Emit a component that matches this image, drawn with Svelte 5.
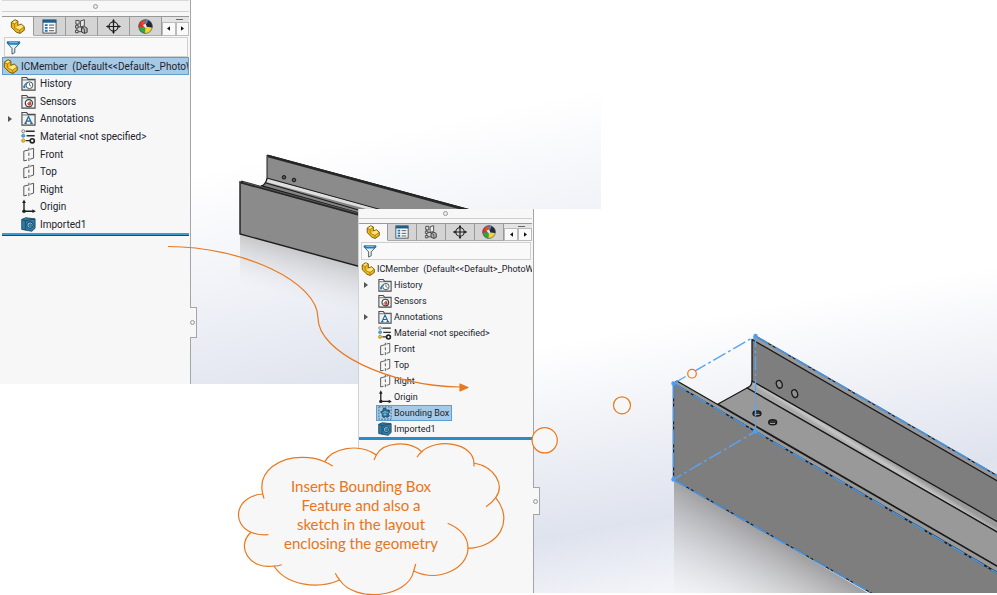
<script>
  const tabs = [
    { icon: 'part', label: 'Feature tree' },
    { icon: 'props', label: 'Properties' },
    { icon: 'config', label: 'Configurations' },
    { icon: 'target', label: 'Dimensions' },
    { icon: 'ball', label: 'Appearances' }
  ];

  const before = [
    { icon: 'history', text: 'History' },
    { icon: 'sensors', text: 'Sensors' },
    { icon: 'notes', text: 'Annotations', expandable: true },
    { icon: 'material', text: 'Material <not specified>' },
    { icon: 'plane', text: 'Front' },
    { icon: 'plane', text: 'Top' },
    { icon: 'plane', text: 'Right' },
    { icon: 'origin', text: 'Origin' },
    { icon: 'solid', text: 'Imported1' }
  ];

  const after = [
    { icon: 'history', text: 'History', expandable: true },
    ...before.slice(1, 8),
    { icon: 'bbox', text: 'Bounding Box', selected: true },
    before[8]
  ];
</script>

{#snippet glyph(name)}
  <svg class="icon" viewBox="0 0 16 16" aria-hidden="true">
    {#if name === 'part'}
      <path d="M1.400 3.400 5.400.8 8.400 2.200V6.800L12 5.400 15.200 8.200v3.800L10.600 15.400 6.800 14 1.400 8.800z" fill="#eeb91c" stroke="#6e5208" stroke-width="1" stroke-linejoin="round" />
      <path d="M2.200 3.600 5.400 1.500 7.800 2.600 4.600 4.800zM5.600 9.400 8.600 7.400 11.800 6.200 14.600 8.400 10.200 11.400z" fill="#ffe680" />
      <path d="M1.600 3.800 4.700 5.200v4.200l5.600 2.600 4.700-3.600M10.300 12v3M4.700 5.200 8.200 2.600" fill="none" stroke="#8a690c" stroke-width=".7" />
    {:else if name === 'props'}
      <rect x="1" y="1" width="14" height="14" fill="#fff" stroke="#3c4a55" />
      <path d="M1 1h14v3H1z" fill="#1c5f8f" />
      <path d="M3 6.500h3M3 9.500h3M3 12.500h3" stroke="#1f78ad" stroke-width="2" />
      <path d="M7.500 6.500H13M7.500 9.500H13M7.500 12.500H13" stroke="#434343" stroke-width="1" />
    {:else if name === 'config'}
      <path d="M3 4v11M3 8.500h5M3 13.500h6" fill="none" stroke="#444" stroke-width="1" />
      <path d="M2 1.500h3.500v4H2zM1.600 7h2.800v2.600H1.600zM1.600 12h2.800v2.600H1.600z" fill="#ddd" stroke="#444" />
      <path d="M7 2 11 .8v6.400L7 8.400z" fill="#eee" stroke="#444" />
      <path d="M8 9.400l3.400-1.200L14 9.800v4.400l-2.800 1.200L8 13.800z" fill="#b5b5b5" stroke="#333" />
      <path d="M8 9.400l3.200 1.600v4.200" fill="none" stroke="#333" stroke-width=".8" />
    {:else if name === 'target'}
      <circle cx="8" cy="8" r="4.800" fill="none" stroke="#1c1c1c" stroke-width="1.300" />
      <path d="M8 .8v14.400M.8 8h14.400" stroke="#1c1c1c" stroke-width="1.300" />
      <path d="m8 0-1.600 2.600h3.200zM8 16l-1.600-2.600h3.200zM0 8l2.600-1.600v3.200zM16 8l-2.600-1.600v3.200z" fill="#1c1c1c" />
    {:else if name === 'ball'}
      <circle cx="8" cy="8" r="7.400" fill="#2f6fbd" />
      <path d="M8 8 3 2.500A7.400 7.400 0 0 1 8 .6l1 .1z" fill="#3d8ed6" />
      <path d="M8 8 3 2.500A7.400 7.400 0 0 0 .8 9z" fill="#dd3020" />
      <path d="M3 2.500 8 .6l.4 4L4 7z" fill="#e8452f" />
      <path d="M8 8 .8 9a7.400 7.400 0 0 0 6.600 6.400z" fill="#37a33c" />
      <path d="M8 8l-.6 7.400A7.400 7.400 0 0 0 15.200 9z" fill="#f5d42c" />
      <path d="M8 8 9.600.8A7.400 7.400 0 0 1 15.200 9z" fill="#27292d" />
      <path d="M8 .6l3 .6L9.400 5 8 5z" fill="#3d8ed6" />
      <path d="M5 6.600 8 5l1.400 3L8 9.600z" fill="#f3e9e2" />
      <circle cx="8" cy="8" r="7.300" fill="none" stroke="#555" stroke-width=".6" />
    {:else if name === 'filter'}
      <path d="M1 3 6.400 9v6l3-1.600V9L15 3z" fill="#e9edf0" stroke="#3f5563" stroke-width="1" stroke-linejoin="round" />
      <path d="M1 1.400h14v2.200L13 5H3L1 3.600z" fill="#1f7fb4" />
      <path d="M3.600 2.800h8.800" stroke="#9ed2ee" stroke-width=".8" />
    {:else if name === 'history' || name === 'sensors' || name === 'notes'}
      <path d="M1 15V1.600h5l1.400 2H15V15z" fill="#f1f1f1" stroke="#4b4b4b" stroke-width="1.200" />
      <path d="M1.400 4.200h13.200" stroke="#4b4b4b" stroke-width=".8" />
      {#if name === 'history'}
        <circle cx="9" cy="9.800" r="3.600" fill="#fff" stroke="#3b4b55" />
        <path d="M9 7.500v2.300l1.800 1" fill="none" stroke="#333" stroke-width=".8" />
        <path d="M3.400 12.800c0-3 1-4.600 3.600-5.400" fill="none" stroke="#1f7fb4" stroke-width="1.300" />
        <path d="m2 10.400 1.200 3 2.200-2z" fill="#1f7fb4" />
      {:else if name === 'sensors'}
        <circle cx="8.400" cy="9.800" r="3.800" fill="#fff" stroke="#3d3d3d" stroke-width="1.300" />
        <path d="m6.800 11.600 3.600-4 .6 3.400-1.600 1.600z" fill="#d93d26" />
        <path d="m6.600 11 3-3.200" stroke="#222" stroke-width=".9" />
      {:else}
        <path d="M4.600 13.200 8 5.800l3.400 7.400M5.800 10.800h4.400M3.600 13.300h2.600M9.800 13.300h2.800" fill="none" stroke="#1c6c9c" stroke-width="1.300" />
      {/if}
    {:else if name === 'material'}
      <path d="M5 2.400h9.600M6 7.200h8.600M5 12.400h5" stroke="#2d2d2d" stroke-width="1.500" />
      <circle cx="2.400" cy="2.400" r="1.600" fill="#eee" stroke="#666" stroke-width=".8" />
      <circle cx="2.400" cy="7.200" r="1.700" fill="#4db1dd" stroke="#24779e" stroke-width=".7" />
      <circle cx="2.400" cy="12.400" r="1.800" fill="#f2c51d" stroke="#96760a" stroke-width=".7" />
      <circle cx="12" cy="12.600" r="2.200" fill="#fff" stroke="#222" stroke-width="1.800" />
    {:else if name === 'plane'}
      <path d="M8 3.200 3 4.400v10.400l3.400-.8M9.600 2.400 13.400 1.400v10.400l-3.600 1.200M8.400.8v3M8.400 6v3.400M8.400 11.600v3.400" fill="none" stroke="#4d4d4d" stroke-width="1" />
    {:else if name === 'origin'}
      <path d="M3.200 2.400V13h10" fill="none" stroke="#1f1f1f" stroke-width="1.500" />
      <path d="M3.200.4 1.200 4.200h4zM15.800 13l-3.600-2v4z" fill="#1f1f1f" />
      <circle cx="3.200" cy="13" r="1.900" fill="#1f1f1f" />
    {:else if name === 'solid'}
      <path d="M.8 2.600 5 .8l10 1.200v10l-3.400 3.200-10.800-2z" fill="#2f7ea8" stroke="#153f58" stroke-width=".9" stroke-linejoin="round" />
      <path d="M.8 2.600 4.600 4v10M4.600 4 15 2" fill="none" stroke="#153f58" stroke-width=".8" />
      <circle cx="9.600" cy="8.600" r="3.400" fill="#8fc8e2" stroke="#123a52" />
      <circle cx="10" cy="8.800" r="1.700" fill="#3a8bb5" stroke="#123a52" stroke-width=".6" />
    {:else if name === 'bbox'}
      <rect x="1" y="1" width="14" height="14" fill="none" stroke="#3c5a70" stroke-dasharray="2 1.400" />
      <path d="M3 6.600 5.600 5.400 6 2.800l2.600-.6 1.200 2.600 3-.4.400 3-1.600 1.400 1.400 2.600-2.400 1.600-2-1-1.800 1.400-2-1.600.2-2.400z" fill="#256f9b" stroke="#123a52" stroke-width=".8" />
      <path d="m5 8 3-1.600 3.600 1.200M8 6.400v5M6 10l4-.6" fill="none" stroke="#9bcde8" stroke-width=".8" />
    {/if}
  </svg>
{/snippet}

{#snippet panel(id, items)}
  <aside class="panel">
    <div class="grip"><i class="knob"></i></div>
    <div class="tabs">
      {#each tabs as tab, i}
        <button class="tab" class:active={i === 0} aria-label={tab.label}>{@render glyph(tab.icon)}</button>
      {/each}
      <div class="pager">
        <button aria-label="Previous tabs"><svg viewBox="0 0 4 6"><path d="M4 0 0 3l4 3z" /></svg></button>
        <button aria-label="Next tabs"><svg viewBox="0 0 4 6"><path d="m0 0 4 3-4 3z" /></svg></button>
      </div>
    </div>
    <label class="filter" for={id}>
      {@render glyph('filter')}
      <input {id} type="text" aria-label="Filter" />
    </label>
    <div class="root">{@render glyph('part')}<span>ICMember&nbsp; (Default&lt;&lt;Default&gt;_PhotoW</span></div>
    <ul class="tree">
      {#each items as item}
        <li>
          <span class="twist">
            {#if item.expandable}
              <button aria-label="Expand {item.text}"><svg viewBox="0 0 4 6"><path d="m0 0 4 3-4 3z" /></svg></button>
            {/if}
          </span>
          <span class="item" class:selected={item.selected}>{@render glyph(item.icon)}<span>{item.text}</span></span>
        </li>
      {/each}
    </ul>
    <div class="rollback"></div>
    <div class="flap"><i class="knob"></i></div>
  </aside>
{/snippet}

<main class="desk">
  <section class="window first" aria-label="Before">
    <svg class="scene" aria-hidden="true">
      <defs>
        <linearGradient id="shade1" gradientUnits="userSpaceOnUse" x1="300" y1="250" x2="288" y2="296">
          <stop offset="0" stop-color="#bcbcbe" stop-opacity=".8" />
          <stop offset="1" stop-color="#dcdde2" stop-opacity="0" />
        </linearGradient>
      </defs>
      <path d="M240 234 420 283v80L240 310z" fill="url(#shade1)" />
      <path d="M268 178 382 210v20h-40L262 186z" fill="#858585" />
      <path d="M268 179 382 210h-12L266 182z" fill="#dedede" />
      <path d="M267 155 471 210h-89L267 178z" fill="#8b8b8b" stroke="#1d1d1d" stroke-width="1" />
      <path d="M268 156 471 211" stroke="#262626" stroke-width="2.600" />
      <path d="M267 178q-1 7-6 8" fill="none" stroke="#1d1d1d" stroke-width="1.300" />
      <path d="M266 183 362 211M262 186 358 213" stroke="#1d1d1d" stroke-width="1.300" />
      <path d="M240 182 420 231v52L240 234z" fill="#8b8b8b" stroke="#1d1d1d" stroke-width="1.400" />
      <path d="M241 182 420 231" stroke="#262626" stroke-width="3" />
      <path d="M243 182 420 230" stroke="#777" stroke-width=".6" />
      <circle cx="284" cy="177.300" r="1.800" fill="#555" stroke="#1a1a1a" />
      <circle cx="294" cy="180" r="1.800" fill="#555" stroke="#1a1a1a" />
    </svg>
    {@render panel('filter-before', before)}
  </section>

  <section class="window second" aria-label="After">
    <svg class="scene" aria-hidden="true">
      <defs>
        <linearGradient id="shade2" gradientUnits="userSpaceOnUse" x1="760" y1="530" x2="704" y2="626">
          <stop offset="0" stop-color="#a0a0a2" />
          <stop offset="1" stop-color="#eeeff2" stop-opacity="0" />
        </linearGradient>
        <linearGradient id="fillet" gradientUnits="userSpaceOnUse" x1="880" y1="454" x2="875" y2="462">
          <stop offset="0" stop-color="#9a9a9a" />
          <stop offset=".6" stop-color="#c6c6c6" />
          <stop offset="1" stop-color="#a9a9a9" />
        </linearGradient>
      </defs>
      <g transform="translate(-358 -209)" stroke-linejoin="round">
        <path d="M674 479 880 600H674z" fill="url(#shade2)" />
        <path d="M755.500 336 1197 591v6L752 339.500z" fill="#999" />
        <path d="M752 339.500 1197 596v42L752 381z" fill="#7e7e7e" stroke="#1a1a1a" stroke-width="1.300" />
        <path d="M752 381q0 5-5 7L1197 647v-11z" fill="url(#fillet)" stroke="#1a1a1a" stroke-width="1.300" />
        <path d="M747 388 718 404 1197 682v-35z" fill="#999" stroke="#1a1a1a" stroke-width="1.300" />
        <path d="M673.500 383.500 677 381 1197 682v7z" fill="#999" stroke="#1a1a1a" stroke-width="1.300" />
        <path d="M673.500 383.500 1197 690v90L673.500 479.500z" fill="#7e7e7e" />
        <g fill="#909090" stroke="#1a1a1a" stroke-width="1.300">
          <ellipse cx="779.300" cy="384.300" rx="2.800" ry="4" transform="rotate(-20 779.300 384.300)" />
          <ellipse cx="794.700" cy="393.600" rx="2.800" ry="4" transform="rotate(-20 794.700 393.600)" />
          <ellipse cx="757" cy="413.500" rx="4" ry="2.600" fill="#333" />
          <ellipse cx="772.700" cy="422.300" rx="4" ry="2.600" fill="#333" />
        </g>
        <path d="M754.500 414.500h5M770 423.500h5" stroke="#999" stroke-width="1.200" />
        <path d="M755.500 336 1197 591M673.500 479.500V383.500L1197 690M673.500 479.500 1197 780" fill="none" stroke="#1f1f1f" stroke-width="1.300" />
        <path d="M755.500 336 1197 591M673.500 383.500 1197 690M673.500 479.500 1197 780M673.500 383.500v96" fill="none" stroke="#4a98e8" stroke-width="1.600" stroke-dasharray="15 3 2 3" />
        <path d="M673.500 383.500 755.500 336v95.500L673.500 479.500" fill="none" stroke="#5aa5f2" stroke-width="1.400" stroke-dasharray="14 3 3 3" />
        <g fill="#4aa0f8">
          <circle cx="755.500" cy="336" r="2.200" />
          <circle cx="673.500" cy="383.500" r="2.200" />
          <circle cx="755.500" cy="431.500" r="2.200" />
          <circle cx="673.500" cy="479.500" r="2.200" />
        </g>
      </g>
    </svg>
    {@render panel('filter-after', after)}
  </section>

  <svg class="markup" aria-hidden="true">
    <g fill="#f7f7f7" stroke="#e8791f" stroke-width="1.200" stroke-linejoin="round">
      <path d="M168 246.500C243 246.500 318 282 318 318 318 352 389 386 460 387" fill="none" />
      <path d="m460 384 8 3.500-8 3.500z" fill="#e8791f" />
      <path d="M262.700 494C257 470 281 457 302.700 457.300 311 457.300 319 459 324.700 461.700 332 449 358 442 376.300 455 383 442 409 440 421.700 451.700 436 438 473 442 474 463 495 467 505 485 495.700 497.700 514 520 500 547 468 548.300 468 568 439 583 413.700 571 408 598 355 603 339.700 580 317 590 286 585 274 566 250 570 235 547 251 532.300 231 524 235 496 262.700 494Z" />
      <path d="M262.700 494 264 498.500M324.700 461.700Q329 463.500 332.700 466M376.300 455 374 460M421.700 451.700Q419 454 417 457.300M474 463v3.500M495.700 497.700Q492 503 486 506.700M468 548.300Q468 532 447.700 523.300M413.700 571 415.700 564M339.700 580Q337 577 335.300 573.300M274 566Q278 566 281.700 564.700M251 532.300Q259 535.500 268.300 534.700" fill="none" />
      <circle cx="544.700" cy="440.300" r="12.600" />
      <circle cx="622" cy="405.300" r="8.500" />
      <circle cx="692" cy="373.700" r="4.300" />
    </g>
  </svg>
  <p class="callout">Inserts Bounding Box<br />Feature and also a<br />sketch in the layout<br />enclosing the geometry</p>
</main>

<style>
  :global(body) { margin: 0; background: #fff; }
  .desk {
    position: relative;
    min-height: 595px;
    overflow: hidden;
    font-family: Roboto, "Noto Sans", sans-serif;
    color: #20232e;
  }
  .window { position: absolute; display: flex; height: 384px; }
  .first {
    --panel: 191px; --pad: 2px; --grip: 12px; --gap: 4px; --tab: 32px; --tabs: 20px;
    --filter: 20px; --root: 18px; --tree: 158px; --icon: 15px; --text: 10px; --twist: 19px;
    --flap: 307px; --flap-size: 31px; --bar: linear-gradient(#3d9bd6 50%, #2c33a8 50%);
    left: 0; top: 0; width: 601px;
    background: linear-gradient(168deg, #fff 42%, #f1f3f8 65%, #e0e4ee 90%);
  }
  .second {
    --panel: 176px; --pad: 0px; --grip: 10px; --gap: 4px; --tab: 29px; --tabs: 18px;
    --filter: 18px; --root: 17px; --tree: 160px; --icon: 14px; --text: 9px; --twist: 17px;
    --flap: 278px; --flap-size: 28px; --bar: #2b8bc6;
    left: 358px; right: 0; top: 209px;
    background: linear-gradient(170deg, #fff 34%, #dfe3ee 73%, #f8f9fb 92%);
  }
  .scene, .markup { position: absolute; left: 0; top: 0; width: 100%; height: 100%; }
  .markup { pointer-events: none; }
  .panel {
    position: relative;
    box-sizing: border-box;
    width: var(--panel);
    padding: 0 1px 0 var(--pad);
    background: #f7f7f7;
    border-right: 1px solid #a5a5a5;
    font-size: var(--text);
    display: flex;
    flex-direction: column;
  }
  .second .panel { border-left: 1px solid #d2d2d2; }
  .icon { width: var(--icon); height: var(--icon); flex: none; display: block; }
  button { padding: 0; border: 0; background: none; font: inherit; color: inherit; display: flex; align-items: center; justify-content: center; }
  button svg { fill: #111; }
  .grip { box-sizing: border-box; height: var(--grip); border-bottom: 1px solid #cfcfcf; display: flex; align-items: center; justify-content: center; }
  .first .grip { border-top: 1px solid #d8d8d8; }
  .knob { box-sizing: border-box; width: 5px; height: 5px; border: 1px solid #999; border-radius: 50%; background: #eee; }
  .tabs { box-sizing: border-box; height: var(--tabs); margin-top: var(--gap); display: flex; border-top: 1px solid #999; }
  .tab { box-sizing: border-box; width: var(--tab); background: #d4d4d4; border-right: 1px solid #999; border-bottom: 1px solid #aaa; }
  .tab.active { background: #f9f9f9; border-bottom-color: #f9f9f9; }
  .pager { flex: 1; display: flex; align-items: flex-end; position: relative; background: #e4e4e4; }
  .pager::before { content: ""; position: absolute; top: 2px; left: 50%; width: 7px; height: 1px; background: #666; }
  .pager button { box-sizing: border-box; flex: 1; height: 75%; border: 1px solid #bbb; background: #fafafa; }
  .pager svg { width: 3px; height: 5px; }
  .filter { box-sizing: border-box; height: var(--filter); margin: 1px 1px 0 2px; display: flex; align-items: center; background: #f9f9f9; border: 1px solid #d0d0d0; padding-left: 1px; }
  .filter input { flex: 1; min-width: 0; height: 100%; padding: 0 4px; border: 0; background: none; font: inherit; outline: none; }
  .root { box-sizing: border-box; height: var(--root); padding-left: 2px; display: flex; align-items: center; gap: 2px; overflow: hidden; white-space: nowrap; }
  .first .root { background: #a6cae6; border: 1px solid #5b9fd0; padding-left: 0; gap: 3px; }
  .tree { list-style: none; margin: 0; padding: 0; height: var(--tree); display: flex; flex-direction: column; }
  li { flex: 1; display: flex; align-items: center; min-height: 0; }
  .twist { width: var(--twist); display: flex; justify-content: center; padding-right: 3px; box-sizing: border-box; }
  .twist svg { width: 4px; height: 6px; fill: #555; }
  .item { box-sizing: border-box; height: 100%; display: flex; align-items: center; gap: 2px; padding: 0 2px 0 1px; border: 1px solid transparent; white-space: nowrap; }
  .item.selected { background: #a6cae6; border-color: #5b9fd0; }
  .first .item { border-width: 0; gap: 4px; padding: 0; }
  .rollback { height: 3px; background: var(--bar); }
  .flap { box-sizing: border-box; position: absolute; left: 100%; top: var(--flap); width: 7px; height: var(--flap-size); border: 1px solid #a5a5a5; border-left: 0; background: #f7f7f7; display: flex; align-items: center; }
  .callout { position: absolute; left: 276px; top: 477px; width: 170px; margin: 0; text-align: center; font: 15px/19px Lato, sans-serif; color: #e8751a; }
</style>
